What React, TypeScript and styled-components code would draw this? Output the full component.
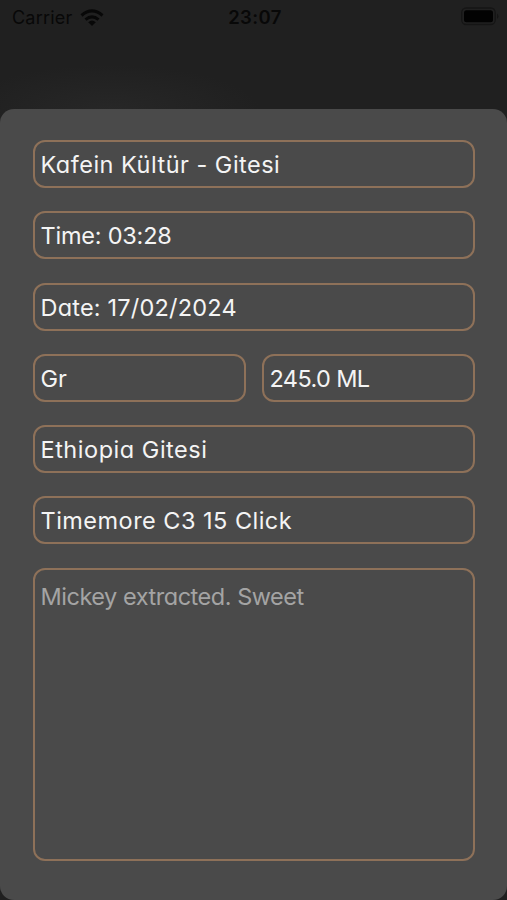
import React from "react";
import styled, { createGlobalStyle } from "styled-components";

const GlobalStyle = createGlobalStyle`
  * { box-sizing: border-box; }
  body { margin: 0; background: #202020; }
`;

const Screen = styled.main`
  width: 507px;
  height: 900px;
  display: flex;
  flex-direction: column;
  overflow: hidden;
  background: radial-gradient(ellipse 150px 45px at 110px 110px, #272727, #202020);
  font-family: Inter, sans-serif;
`;

const StatusBar = styled.header`
  height: 109px;
  flex: none;
  display: grid;
  grid-template-columns: 1fr auto 1fr;
  align-items: start;
  padding: 7px 9px 0 12px;
  color: #080808;
  font-size: 18px;
  line-height: 21px;
`;

const Carrier = styled.div`
  display: flex;
  align-items: center;
  gap: 8px;
  letter-spacing: 0.2px;
`;

const Clock = styled.time`
  font-weight: 600;
  font-size: 18.5px;
  letter-spacing: 0.4px;
`;

const BatterySlot = styled.div`
  display: flex;
  justify-content: flex-end;
  margin-right: -1px;
`;

const Sheet = styled.section`
  height: 791px;
  display: flex;
  flex-direction: column;
  gap: 23.3px;
  padding: 31px 32px 39.5px 33px;
  border-radius: 14px;
  background: #4a4a4a;
`;

const Row = styled.div`
  display: flex;
  gap: 16px;
`;

const Field = styled.div<{ $tracking: number }>`
  flex: 1;
  height: 48px;
  padding: 0 5.5px;
  border: 2px solid #8e7159;
  border-radius: 12px;
  color: #f4f4f4;
  font-size: 23.5px;
  line-height: 45px;
  letter-spacing: ${(p) => p.$tracking}px;
  font-feature-settings: "cv11" 1, "calt" 0;
  white-space: nowrap;
`;

const Notes = styled(Field)`
  height: auto;
  padding-top: 4px;
  color: #a4a4a4;
`;

const WifiIcon = () => (
  <svg width="24" height="18" viewBox="0 0 24 18" fill="none" stroke="#080808" strokeWidth="3">
    <path d="M1.5 6.5Q12-2.7 22.5 6.5M5.5 10.7Q12 5 18.5 10.7" />
    <path d="M8.2 13.2Q12 10 15.8 13.2L12 17Z" fill="#080808" stroke="none" />
  </svg>
);

const BatteryIcon = () => (
  <svg width="38" height="19" viewBox="0 0 38 19">
    <rect x="0.7" y="1" width="33.5" height="16.5" rx="4.5" fill="none" stroke="#151515" strokeWidth="1.3" />
    <rect x="3" y="3.2" width="29" height="12" rx="2.5" fill="#020202" />
    <path d="M36 6.5Q39 9.2 36 12Z" fill="#151515" />
  </svg>
);

export default function App() {
  return (
    <>
      <GlobalStyle />
      <Screen>
        <StatusBar>
          <Carrier>
            Carrier
            <WifiIcon />
          </Carrier>
          <Clock>23:07</Clock>
          <BatterySlot>
            <BatteryIcon />
          </BatterySlot>
        </StatusBar>
        <Sheet>
          <Row><Field $tracking={0.49}>Kafein Kültür - Gitesi</Field></Row>
          <Row><Field $tracking={-0.22}>Time: 03:28</Field></Row>
          <Row><Field $tracking={0.2}>Date: 17/02/2024</Field></Row>
          <Row>
            <Field $tracking={0}>Gr</Field>
            <Field $tracking={-0.62}>245.0 ML</Field>
          </Row>
          <Row><Field $tracking={0.53}>Ethiopia Gitesi</Field></Row>
          <Row><Field $tracking={0.47}>Timemore C3 15 Click</Field></Row>
          <Notes $tracking={-0.47}>Mickey extracted. Sweet</Notes>
        </Sheet>
      </Screen>
    </>
  );
}
